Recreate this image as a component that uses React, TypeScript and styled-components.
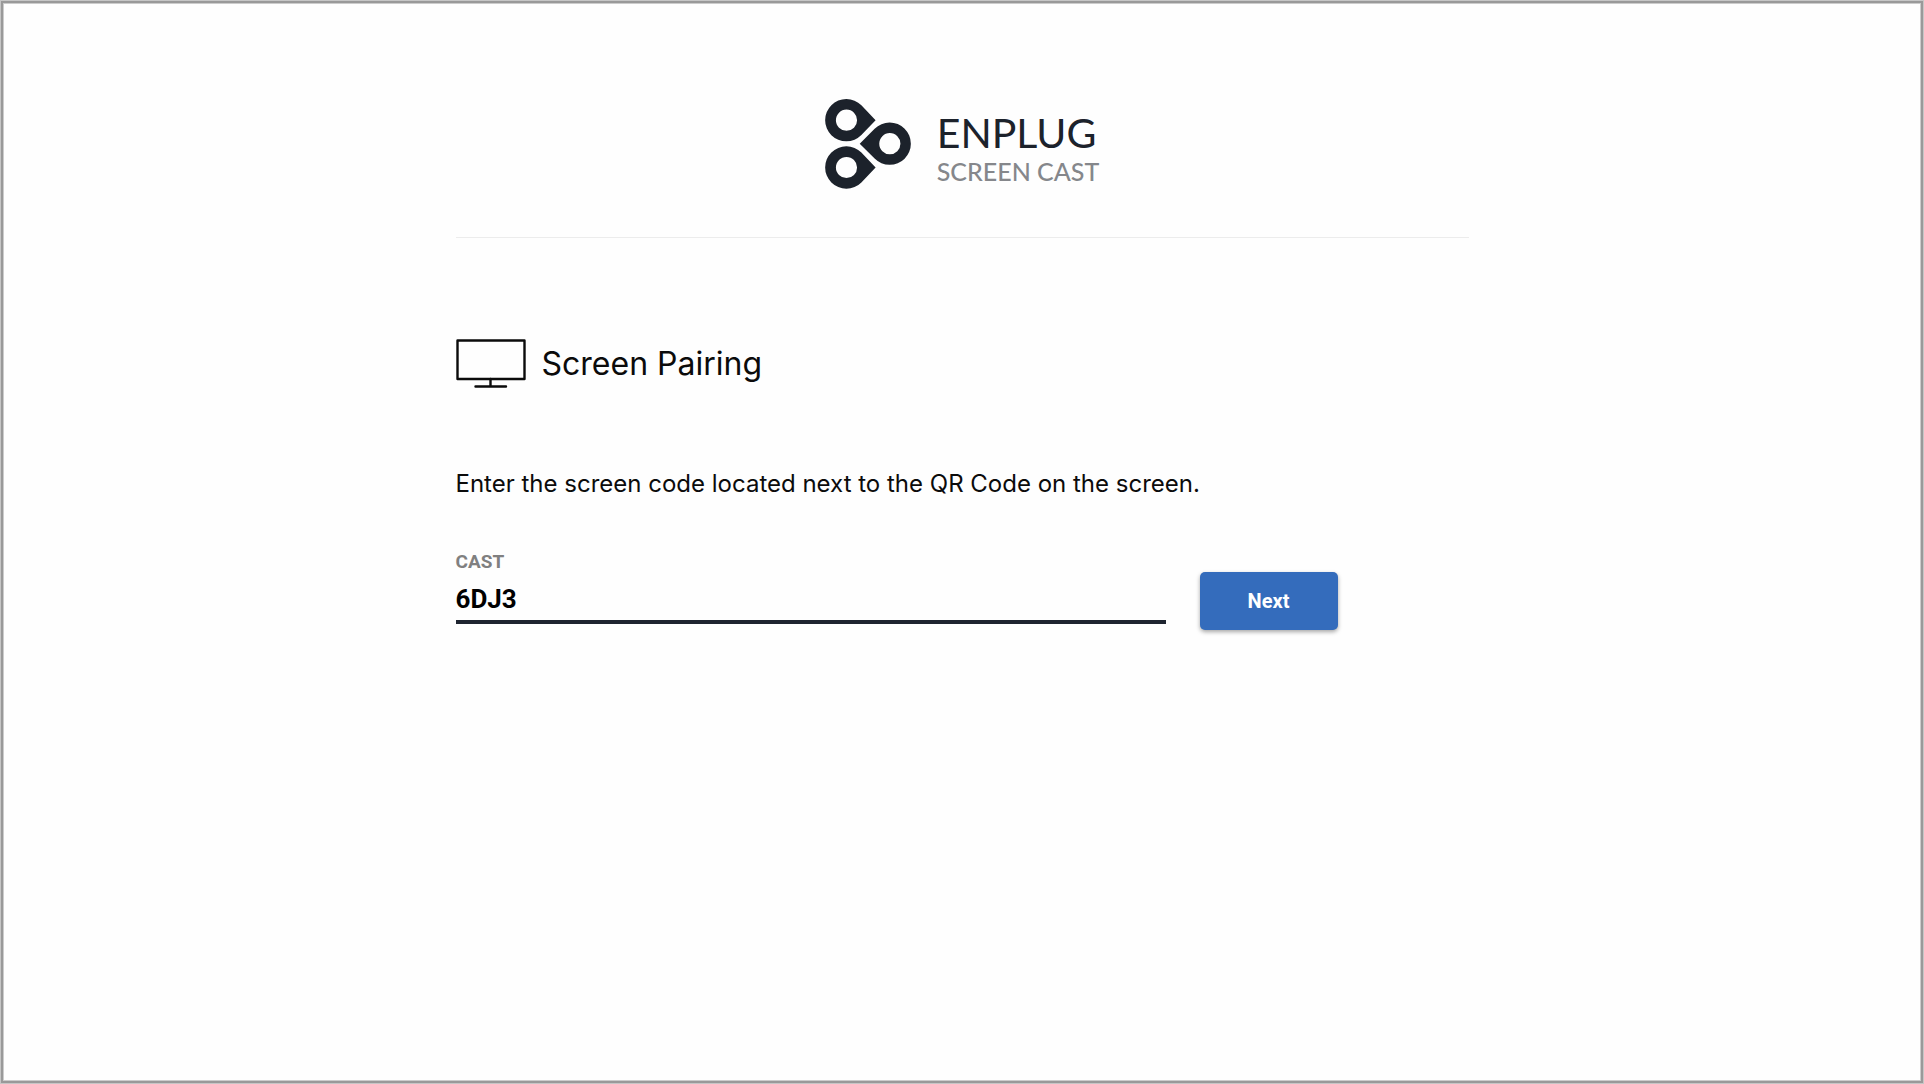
import React, { useState } from "react";
import styled, { createGlobalStyle } from "styled-components";

const GlobalStyle = createGlobalStyle`
  *, *::before, *::after { box-sizing: border-box; }
  body { margin: 0; background: #fff; }
`;

const Page = styled.div`
  min-height: 100vh;
  border: 1px solid #c6c6c6;
  background: #fefefe;
  box-shadow: inset 0 0 0 2px #999, inset 0 0 0 3px #ccc;
  color: #0b0b0b;
  font-family: Inter, "Open Sans", sans-serif;
`;

const Container = styled.div`
  width: 100%;
  max-width: 1013px;
  margin: 0 auto;
`;

const Header = styled.header`
  display: flex;
  align-items: center;
  justify-content: center;
  gap: 26px;
  padding: 98px 0 48px;
  border-bottom: 1px solid #ececec;
`;

const LogoMark = styled.svg`
  width: 86px;
  height: 90px;
  flex: none;
`;

const Brand = styled.div`
  display: flex;
  flex-direction: column;
  padding-top: 10px;
  font-family: Lato, "Open Sans", sans-serif;
`;

const BrandName = styled.span`
  color: #1c222b;
  font-size: 41px;
  line-height: 44px;
`;

const BrandProduct = styled.span`
  color: #85878b;
  font-size: 25px;
  line-height: 32px;
  font-weight: 500;
`;

const TitleRow = styled.div`
  display: flex;
  align-items: center;
  gap: 16px;
  padding-top: 101px;
`;

const MonitorIcon = styled.svg`
  width: 70px;
  height: 50px;
  flex: none;
`;

const Title = styled.h1`
  margin: 0;
  font-size: 32px;
  line-height: 48px;
  font-weight: 400;
`;

const Instruction = styled.p`
  margin: 79px 0 50px;
  font-size: 24px;
  line-height: 32px;
`;

const Form = styled.form`
  display: flex;
  align-items: flex-end;
  gap: 34px;
  font-family: Roboto, "Liberation Sans", sans-serif;
`;

const Field = styled.div`
  display: flex;
  flex-direction: column;
  flex: 0 1 710px;
  padding-bottom: 6px;
`;

const Label = styled.label`
  color: #808080;
  font-size: 19px;
  line-height: 24px;
  font-weight: 700;
`;

const CodeInput = styled.input`
  width: 100%;
  height: 50px;
  padding: 4px 0 0;
  border: 0;
  border-bottom: 4px solid #1e2430;
  border-radius: 0;
  outline: none;
  background: transparent;
  color: #000;
  font: 700 26px/32px Roboto, "Liberation Sans", sans-serif;
`;

const NextButton = styled.button`
  width: 138px;
  height: 58px;
  flex: none;
  border: 0;
  border-radius: 5px;
  background: #346cbc;
  box-shadow: 0 2px 4px rgba(0, 0, 0, 0.35);
  color: #fff;
  font: 700 20px/24px Roboto, "Liberation Sans", sans-serif;
  cursor: pointer;
`;

export default function App() {
  const [code, setCode] = useState("6DJ3");

  return (
    <Page>
      <GlobalStyle />
      <Container>
        <Header>
          <LogoMark viewBox="0 0 258 272" aria-hidden="true">
            <g fill="#1c222b" fillRule="evenodd">
              <path d="M109 19 L152 64 L109 109 A64 64 0 1 1 109 19 Z M64 32 a32 32 0 1 0 0 64 a32 32 0 1 0 0-64 Z" />
              <path d="M109 162 L152 207 L109 252 A64 64 0 1 1 109 162 Z M64 175 a32 32 0 1 0 0 64 a32 32 0 1 0 0-64 Z" />
              <path d="M149 90 L104 135 L149 180 A64 64 0 1 0 149 90 Z M195 103 a32 32 0 1 0 0 64 a32 32 0 1 0 0-64 Z" />
            </g>
          </LogoMark>
          <Brand>
            <BrandName>ENPLUG</BrandName>
            <BrandProduct>SCREEN CAST</BrandProduct>
          </Brand>
        </Header>
        <main>
          <TitleRow>
            <MonitorIcon viewBox="0 0 70 50" aria-hidden="true">
              <g fill="none" stroke="#0b0b0b" strokeWidth="2.4" strokeLinecap="round" strokeLinejoin="round">
                <rect x="1.5" y="1.5" width="67" height="38.5" />
                <path d="M34.5 40v7.5M19.5 47.5h30.5" />
              </g>
            </MonitorIcon>
            <Title>Screen Pairing</Title>
          </TitleRow>
          <Instruction>Enter the screen code located next to the QR Code on the screen.</Instruction>
          <Form onSubmit={(event) => event.preventDefault()}>
            <Field>
              <Label htmlFor="screen-code">CAST</Label>
              <CodeInput
                id="screen-code"
                type="text"
                autoComplete="off"
                value={code}
                onChange={(event) => setCode(event.target.value)}
              />
            </Field>
            <NextButton type="submit">Next</NextButton>
          </Form>
        </main>
      </Container>
    </Page>
  );
}
